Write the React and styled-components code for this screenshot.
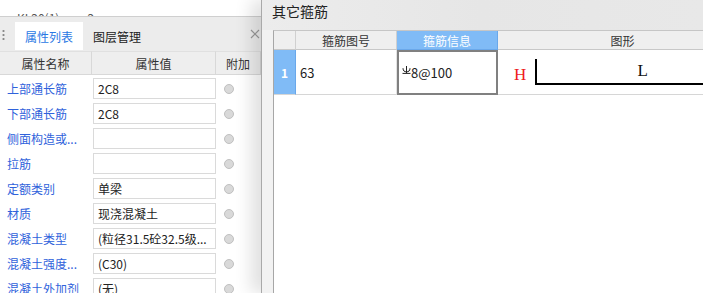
import React from "react";
import styled, { createGlobalStyle } from "styled-components";

const Global = createGlobalStyle`
  html, body { margin: 0; padding: 0; background: #ffffff; overflow: hidden; }
  body { font-family: "Noto Sans CJK SC", "Noto Sans", sans-serif; }
`;

const FONT = `"Noto Sans CJK SC", "Noto Sans", sans-serif`;

const Screen = styled.div`
  display: flex;
  width: 703px;
  height: 293px;
  overflow: hidden;
  font-family: ${FONT};
`;

/* ---------- left property panel ---------- */
const LeftPanel = styled.div`
  width: 261px;
  flex: none;
  display: flex;
  flex-direction: column;
  background: #ffffff;
  overflow: hidden;
`;

const TopStrip = styled.div`
  flex: none;
  height: 17px;
  overflow: hidden;
  border-bottom: 1px solid #cfcfcf;
  display: flex;
  gap: 28px;
  padding: 10px 0 0 17px;
  box-sizing: border-box;
  font-size: 12px;
  line-height: 16px;
  color: #555;
`;

const TabBar = styled.div`
  flex: none;
  height: 34px;
  background: #ececec;
  display: flex;
  align-items: flex-end;
  padding: 0 0 1px 0;
  box-sizing: border-box;
`;

const Grip = styled.div`
  width: 3px;
  height: 13px;
  margin: 0 10px 8px 2px;
  align-self: flex-end;
  background: radial-gradient(circle, #8a8a8a 1px, transparent 1.2px) 0 0 / 3px 4px repeat-y;
`;

const Tab = styled.div`
  height: 28px;
  padding: 0 10px;
  display: flex;
  align-items: center;
  font-size: 12px;
  color: ${(p) => (p.$active ? "#2a78e4" : "#222")};
  background: ${(p) => (p.$active ? "#ffffff" : "transparent")};
`;

const CloseX = styled.div`
  margin-left: auto;
  margin-right: 1px;
  align-self: center;
  width: 10px;
  height: 10px;
  display: flex;
`;

const PropGrid = styled.div`
  flex: none;
  display: grid;
  grid-template-columns: 92px 124px 1fr;
  grid-auto-rows: 25px;
`;

const HeadCell = styled.div`
  background: #eeeeee;
  border-right: 1px solid #d8d8d8;
  border-bottom: 1px solid #d8d8d8;
  border-top: 1px solid #e0e0e0;
  display: flex;
  align-items: center;
  justify-content: center;
  font-size: 12px;
  color: #333;
  height: 24px;
  box-sizing: border-box;
`;

const Label = styled.div`
  display: flex;
  align-items: center;
  padding-left: 7px;
  font-size: 12px;
  color: #2f62db;
  white-space: nowrap;
  overflow: hidden;
`;

const ValueBox = styled.div`
  margin: 2px 0 2px 1px;
  height: 21px;
  box-sizing: border-box;
  border: 1px solid #dadada;
  display: flex;
  align-items: center;
  padding-left: 4px;
  font-size: 12px;
  color: #222;
  white-space: nowrap;
  overflow: hidden;
`;

const DotCell = styled.div`
  display: flex;
  align-items: center;
  justify-content: center;
  padding-right: 20px;
`;

const Dot = styled.span`
  width: 8px;
  height: 8px;
  border-radius: 50%;
  background: #d9d9d9;
  border: 1px solid #c0c0c0;
`;

/* ---------- dialog ---------- */
const Dialog = styled.div`
  flex: 1;
  display: flex;
  flex-direction: column;
  border-left: 1px solid #a9a9a9;
  background: #f2f2f2;
  box-shadow: -10px 0 16px rgba(0, 0, 0, 0.12);
  position: relative;
  z-index: 1;
  min-width: 0;
`;

const TitleBar = styled.div`
  height: 30px;
  flex: none;
  display: flex;
  align-items: flex-start;
  padding: 1px 0 0 10px;
  box-sizing: border-box;
  font-size: 14px;
  color: #222;
  background: linear-gradient(90deg, #ececec, #e6e6e6 50%, #e8e8e8);
`;

const Body = styled.div`
  flex: 1;
  display: flex;
  padding-left: 11px;
  min-height: 0;
`;

const Table = styled.div`
  flex: 1;
  background: #ffffff;
  border-left: 1px solid #a7a7a7;
  border-top: 1px solid #c6c6c6;
  display: grid;
  grid-template-columns: 22px 101px 101px 250px;
  grid-template-rows: 19px 45px;
  align-content: start;
  overflow: hidden;
`;

const TH = styled.div`
  background: ${(p) => (p.$sel ? "#80bbf6" : "#efefef")};
  color: ${(p) => (p.$sel ? "#ffffff" : "#333")};
  border-right: 1px solid ${(p) => (p.$sel ? "#6aa8ea" : "#d0d0d0")};
  border-bottom: 1px solid ${(p) => (p.$sel ? "#6aa8ea" : "#c8c8c8")};
  display: flex;
  align-items: center;
  justify-content: center;
  font-size: 12px;
  box-sizing: border-box;
`;

const RowNum = styled.div`
  background: #80bbf6;
  color: #ffffff;
  font-weight: bold;
  font-size: 12px;
  display: flex;
  align-items: center;
  justify-content: center;
  border-right: 1px solid #6aa8ea;
  border-bottom: 1px solid #d6d6d6;
`;

const TD = styled.div`
  border-bottom: 1px solid #d6d6d6;
  border-right: 1px solid ${(p) => (p.$sel ? "transparent" : "#e2e2e2")};
  outline: ${(p) => (p.$sel ? "2px solid #808080" : "none")};
  outline-offset: -2px;
  display: flex;
  align-items: center;
  padding-left: ${(p) => (p.$sel ? "5px" : "4px")};
  font-size: 13px;
  color: #222;
  box-sizing: border-box;
`;

const RebarSym = styled.svg`
  width: 9px;
  height: 8px;
  margin-bottom: 5px;
  flex: none;
`;

const ShapeCell = styled.div`
  border-bottom: 1px solid #d6d6d6;
  display: flex;
  align-items: flex-end;
  padding: 0 0 9px 16px;
  box-sizing: border-box;
`;

const HLabel = styled.span`
  font-family: "Liberation Serif", serif;
  font-size: 17px;
  line-height: 17px;
  color: #ee1c1c;
  margin-bottom: 2px;
`;

const Bracket = styled.div`
  flex: 1;
  height: 26px;
  margin-left: 9px;
  border-left: 2px solid #000;
  border-bottom: 2px solid #000;
  display: flex;
  justify-content: center;
  align-items: flex-start;
  padding: 3px 0 0 0;
  box-sizing: border-box;
`;

const LLabel = styled.span`
  font-family: "Liberation Serif", serif;
  font-size: 17px;
  line-height: 17px;
  color: #111;
`;

const rows = [
  ["上部通长筋", "2C8"],
  ["下部通长筋", "2C8"],
  ["侧面构造或...", ""],
  ["拉筋", ""],
  ["定额类别", "单梁"],
  ["材质", "现浇混凝土"],
  ["混凝土类型", "(粒径31.5砼32.5级..."],
  ["混凝土强度...", "(C30)"],
  ["混凝土外加剂", "(无)"],
];

export default function App() {
  return (
    <>
      <Global />
      <Screen>
        <LeftPanel>
          <TopStrip>
            <span>KL20(1)</span>
            <span>2</span>
          </TopStrip>
          <TabBar>
            <Grip />
            <Tab $active>属性列表</Tab>
            <Tab>图层管理</Tab>
            <CloseX>
              <svg width="10" height="10" viewBox="0 0 10 10">
                <path d="M1 1L9 9M9 1L1 9" stroke="#9a9a9a" strokeWidth="1.2" />
              </svg>
            </CloseX>
          </TabBar>
          <PropGrid>
            <HeadCell>属性名称</HeadCell>
            <HeadCell>属性值</HeadCell>
            <HeadCell>附加</HeadCell>
            {rows.map(([k, v]) => (
              <React.Fragment key={k}>
                <Label>{k}</Label>
                <ValueBox>{v}</ValueBox>
                <DotCell>
                  <Dot />
                </DotCell>
              </React.Fragment>
            ))}
          </PropGrid>
        </LeftPanel>
        <Dialog>
          <TitleBar>其它箍筋</TitleBar>
          <Body>
            <Table>
              <TH />
              <TH>箍筋图号</TH>
              <TH $sel>箍筋信息</TH>
              <TH>图形</TH>
              <RowNum>1</RowNum>
              <TD>63</TD>
              <TD $sel>
                <RebarSym viewBox="0 0 9 8">
                  <path
                    d="M4.5 0V7M1 2.2C1 5 2.5 5.8 4.5 5.8C6.5 5.8 8 5 8 2.2M0.5 7.4H8.5"
                    stroke="#222"
                    strokeWidth="1"
                    fill="none"
                  />
                </RebarSym>
                8@100
              </TD>
              <ShapeCell>
                <HLabel>H</HLabel>
                <Bracket>
                  <LLabel>L</LLabel>
                </Bracket>
              </ShapeCell>
            </Table>
          </Body>
        </Dialog>
      </Screen>
    </>
  );
}
